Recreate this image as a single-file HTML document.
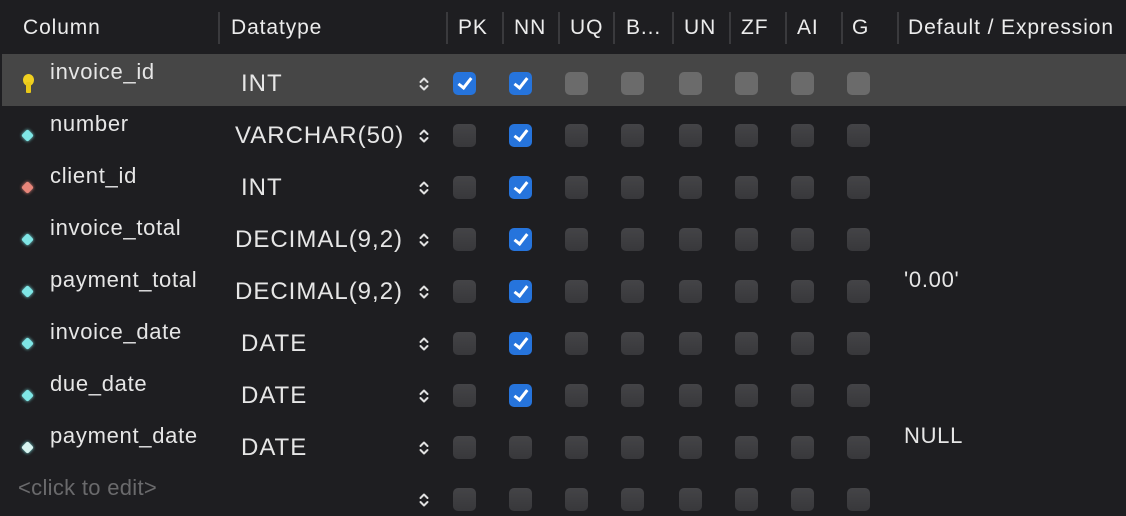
<!DOCTYPE html><html><head><style>
body{margin:0;width:1126px;height:516px;background:#1e1e21;overflow:hidden;font-family:"Liberation Sans",sans-serif;color:#e6e6e6;position:relative}
div{position:absolute}
.h{top:16px;font-size:21px;line-height:24px;color:#ececec;letter-spacing:0.9px}
.s{top:12px;width:2px;height:32px;background:#3a3a3d}
.n{left:50px;font-size:22px;line-height:24px;letter-spacing:0.7px}
.t{font-size:24px;line-height:26px;letter-spacing:1px}
.c{width:23px;height:23px;border-radius:5px;background:linear-gradient(#444447,#38383b)}
.sel .c{background:#6b6b6b}
.k{background:#2674dc!important}
.k:after{content:"";position:absolute;left:8px;top:3px;width:5px;height:11px;border:solid #fff;border-width:0 3px 3px 0;transform:rotate(38deg)}
.st{left:418px;width:12px;height:18px}
.d{left:23px;width:9px;height:9px;transform:rotate(45deg);background:#7fe6e6;border-radius:2px;box-shadow:0 0 3px #7fe6e6}
.r{left:0;width:1126px;height:52px}
</style></head><body>
<svg width="0" height="0" style="position:absolute"><defs><symbol id="sp" viewBox="0 0 12 18"><path d="M2.5 7 L6 3.5 L9.5 7 M2.5 11 L6 14.5 L9.5 11" fill="none" stroke="#e0e0e0" stroke-width="2" stroke-linecap="round" stroke-linejoin="round"/></symbol></defs></svg>
<div class="h" style="left:23px">Column</div><div class="s" style="left:218px"></div>
<div class="h" style="left:231px">Datatype</div><div class="s" style="left:446px"></div>
<div class="h" style="left:458px">PK</div><div class="s" style="left:502px"></div>
<div class="h" style="left:514px">NN</div><div class="s" style="left:558px"></div>
<div class="h" style="left:570px">UQ</div><div class="s" style="left:613px"></div>
<div class="h" style="left:626px">B...</div><div class="s" style="left:672px"></div>
<div class="h" style="left:684px">UN</div><div class="s" style="left:729px"></div>
<div class="h" style="left:741px">ZF</div><div class="s" style="left:785px"></div>
<div class="h" style="left:797px">AI</div><div class="s" style="left:841px"></div>
<div class="h" style="left:852px">G</div><div class="s" style="left:897px"></div>
<div class="h" style="left:908px">Default / Expression</div>

<div class="r sel" style="top:54px;left:2px;background:#464646">
<div style="left:21px;top:20px;width:11px;height:12px;border-radius:50%;background:#f0d020"></div><div style="left:24px;top:28px;width:5px;height:11px;background:#e8c818;border-radius:1px"></div>
<div class="n" style="top:6px;left:48px">invoice_id</div><div class="t" style="left:239px;top:17px">INT</div>
<svg class="st" style="position:absolute;left:416px;top:21px" width="12" height="18"><use href="#sp"/></svg>
<div class="c k" style="left:451px;top:18px"></div><div class="c k" style="left:507px;top:18px"></div><div class="c" style="left:563px;top:18px"></div><div class="c" style="left:619px;top:18px"></div><div class="c" style="left:677px;top:18px"></div><div class="c" style="left:733px;top:18px"></div><div class="c" style="left:789px;top:18px"></div><div class="c" style="left:845px;top:18px"></div>
</div>

<div class="r" style="top:106px"><div class="d" style="top:25px"></div><div class="n" style="top:6px">number</div><div class="t" style="left:235px;top:17px">VARCHAR(50)</div><svg class="st" style="position:absolute;top:21px" width="12" height="18"><use href="#sp"/></svg>
<div class="c" style="left:453px;top:18px"></div><div class="c k" style="left:509px;top:18px"></div><div class="c" style="left:565px;top:18px"></div><div class="c" style="left:621px;top:18px"></div><div class="c" style="left:679px;top:18px"></div><div class="c" style="left:735px;top:18px"></div><div class="c" style="left:791px;top:18px"></div><div class="c" style="left:847px;top:18px"></div></div>

<div class="r" style="top:158px"><div class="d" style="top:25px;background:#e8867a;box-shadow:0 0 3px #e8867a"></div><div class="n" style="top:6px">client_id</div><div class="t" style="left:241px;top:17px">INT</div><svg class="st" style="position:absolute;top:21px" width="12" height="18"><use href="#sp"/></svg>
<div class="c" style="left:453px;top:18px"></div><div class="c k" style="left:509px;top:18px"></div><div class="c" style="left:565px;top:18px"></div><div class="c" style="left:621px;top:18px"></div><div class="c" style="left:679px;top:18px"></div><div class="c" style="left:735px;top:18px"></div><div class="c" style="left:791px;top:18px"></div><div class="c" style="left:847px;top:18px"></div></div>

<div class="r" style="top:210px"><div class="d" style="top:25px"></div><div class="n" style="top:6px">invoice_total</div><div class="t" style="left:235px;top:17px">DECIMAL(9,2)</div><svg class="st" style="position:absolute;top:21px" width="12" height="18"><use href="#sp"/></svg>
<div class="c" style="left:453px;top:18px"></div><div class="c k" style="left:509px;top:18px"></div><div class="c" style="left:565px;top:18px"></div><div class="c" style="left:621px;top:18px"></div><div class="c" style="left:679px;top:18px"></div><div class="c" style="left:735px;top:18px"></div><div class="c" style="left:791px;top:18px"></div><div class="c" style="left:847px;top:18px"></div></div>

<div class="r" style="top:262px"><div class="d" style="top:25px"></div><div class="n" style="top:6px">payment_total</div><div class="t" style="left:235px;top:17px">DECIMAL(9,2)</div><svg class="st" style="position:absolute;top:21px" width="12" height="18"><use href="#sp"/></svg>
<div class="c" style="left:453px;top:18px"></div><div class="c k" style="left:509px;top:18px"></div><div class="c" style="left:565px;top:18px"></div><div class="c" style="left:621px;top:18px"></div><div class="c" style="left:679px;top:18px"></div><div class="c" style="left:735px;top:18px"></div><div class="c" style="left:791px;top:18px"></div><div class="c" style="left:847px;top:18px"></div>
<div class="n" style="left:904px;top:6px">'0.00'</div></div>

<div class="r" style="top:314px"><div class="d" style="top:25px"></div><div class="n" style="top:6px">invoice_date</div><div class="t" style="left:241px;top:17px">DATE</div><svg class="st" style="position:absolute;top:21px" width="12" height="18"><use href="#sp"/></svg>
<div class="c" style="left:453px;top:18px"></div><div class="c k" style="left:509px;top:18px"></div><div class="c" style="left:565px;top:18px"></div><div class="c" style="left:621px;top:18px"></div><div class="c" style="left:679px;top:18px"></div><div class="c" style="left:735px;top:18px"></div><div class="c" style="left:791px;top:18px"></div><div class="c" style="left:847px;top:18px"></div></div>

<div class="r" style="top:366px"><div class="d" style="top:25px"></div><div class="n" style="top:6px">due_date</div><div class="t" style="left:241px;top:17px">DATE</div><svg class="st" style="position:absolute;top:21px" width="12" height="18"><use href="#sp"/></svg>
<div class="c" style="left:453px;top:18px"></div><div class="c k" style="left:509px;top:18px"></div><div class="c" style="left:565px;top:18px"></div><div class="c" style="left:621px;top:18px"></div><div class="c" style="left:679px;top:18px"></div><div class="c" style="left:735px;top:18px"></div><div class="c" style="left:791px;top:18px"></div><div class="c" style="left:847px;top:18px"></div></div>

<div class="r" style="top:418px"><div class="d" style="top:25px;background:#d8f4f0;box-shadow:0 0 3px #7fe6e6"></div><div class="n" style="top:6px">payment_date</div><div class="t" style="left:241px;top:17px">DATE</div><svg class="st" style="position:absolute;top:21px" width="12" height="18"><use href="#sp"/></svg>
<div class="c" style="left:453px;top:18px"></div><div class="c" style="left:509px;top:18px"></div><div class="c" style="left:565px;top:18px"></div><div class="c" style="left:621px;top:18px"></div><div class="c" style="left:679px;top:18px"></div><div class="c" style="left:735px;top:18px"></div><div class="c" style="left:791px;top:18px"></div><div class="c" style="left:847px;top:18px"></div>
<div class="n" style="left:904px;top:6px">NULL</div></div>

<div class="r" style="top:470px;height:46px;overflow:hidden"><div class="n" style="left:18px;top:6px;color:#6a6a6c;letter-spacing:0.3px">&lt;click to edit&gt;</div><svg class="st" style="position:absolute;top:21px" width="12" height="18"><use href="#sp"/></svg>
<div class="c" style="left:453px;top:18px"></div><div class="c" style="left:509px;top:18px"></div><div class="c" style="left:565px;top:18px"></div><div class="c" style="left:621px;top:18px"></div><div class="c" style="left:679px;top:18px"></div><div class="c" style="left:735px;top:18px"></div><div class="c" style="left:791px;top:18px"></div><div class="c" style="left:847px;top:18px"></div></div>
</body></html>
